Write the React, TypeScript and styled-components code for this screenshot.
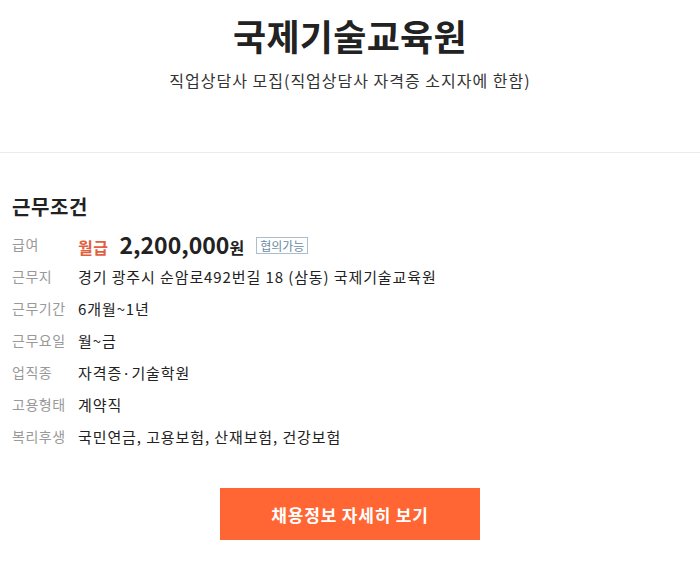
import React from 'react';
import styled, { createGlobalStyle } from 'styled-components';

const GlobalStyle = createGlobalStyle`
  html, body {
    margin: 0;
    padding: 0;
    background: #fff;
  }
  body {
    font-family: "Noto Sans CJK KR", "Noto Sans", sans-serif;
    color: #222;
  }
`;

const Page = styled.div`
  width: 700px;
`;

const Header = styled.header`
  display: flex;
  flex-direction: column;
  align-items: center;
  padding-top: 12px;
  height: 153px;
  box-sizing: border-box;
  border-bottom: 1px solid #ebebeb;
`;

const Title = styled.h1`
  margin: 0;
  font-size: 36px;
  font-weight: 700;
  line-height: 46px;
  color: #222;
  letter-spacing: 0.3px;
`;

const Subtitle = styled.p`
  margin: 11px 0 0;
  font-size: 16px;
  line-height: 22px;
  color: #333;
  letter-spacing: 1px;
`;

const Section = styled.section`
  padding: 39px 12px 0;
`;

const SectionTitle = styled.h2`
  margin: 0 0 6px;
  font-size: 20px;
  font-weight: 700;
  line-height: 30px;
  color: #222;
  letter-spacing: 0.6px;
`;

const Rows = styled.dl`
  margin: 0;
  display: flex;
  flex-direction: column;
`;

const Row = styled.div`
  display: flex;
  align-items: center;
  height: 32px;
`;

const Label = styled.dt`
  width: 66px;
  flex-shrink: 0;
  font-size: 14px;
  color: #999;
  letter-spacing: 0.5px;
`;

const Value = styled.dd`
  margin: 0;
  font-size: 15px;
  color: #222;
  letter-spacing: 0.9px;
  display: flex;
  align-items: baseline;
`;

const PayType = styled.span`
  color: #e0603f;
  font-weight: 700;
  font-size: 16px;
  letter-spacing: 0.5px;
  margin-right: 11px;
`;

const Amount = styled.span`
  font-size: 23px;
  font-weight: 700;
  color: #222;
  letter-spacing: 0;
`;

const Unit = styled.span`
  font-size: 16px;
  font-weight: 700;
  letter-spacing: 0;
  margin-right: 12px;
`;

const Badge = styled.span`
  font-size: 12px;
  color: #6b8aa5;
  border: 1px solid #a9bfd0;
  padding: 0 3px;
  line-height: 15px;
  letter-spacing: 0;
  align-self: center;
  margin-top: 2px;
`;

const Actions = styled.div`
  display: flex;
  justify-content: center;
  padding-top: 36px;
`;

const DetailButton = styled.button`
  width: 260px;
  height: 52px;
  border: none;
  background: #ff6633;
  color: #fff;
  font-family: inherit;
  font-size: 17px;
  font-weight: 700;
  letter-spacing: 0.8px;
  cursor: pointer;
`;

const ROWS: { label: string; value: string }[] = [
  { label: '근무지', value: '경기 광주시 순암로492번길 18 (삼동) 국제기술교육원' },
  { label: '근무기간', value: '6개월~1년' },
  { label: '근무요일', value: '월~금' },
  { label: '업직종', value: '자격증·기술학원' },
  { label: '고용형태', value: '계약직' },
  { label: '복리후생', value: '국민연금, 고용보험, 산재보험, 건강보험' },
];

export default function App() {
  return (
    <Page>
      <GlobalStyle />
      <Header>
        <Title>국제기술교육원</Title>
        <Subtitle>직업상담사 모집(직업상담사 자격증 소지자에 한함)</Subtitle>
      </Header>

      <Section>
        <SectionTitle>근무조건</SectionTitle>
        <Rows>
          <Row>
            <Label>급여</Label>
            <Value>
              <PayType>월급</PayType>
              <Amount>2,200,000</Amount>
              <Unit>원</Unit>
              <Badge>협의가능</Badge>
            </Value>
          </Row>
          {ROWS.map((row) => (
            <Row key={row.label}>
              <Label>{row.label}</Label>
              <Value>{row.value}</Value>
            </Row>
          ))}
        </Rows>
      </Section>

      <Actions>
        <DetailButton>채용정보 자세히 보기</DetailButton>
      </Actions>
    </Page>
  );
}
